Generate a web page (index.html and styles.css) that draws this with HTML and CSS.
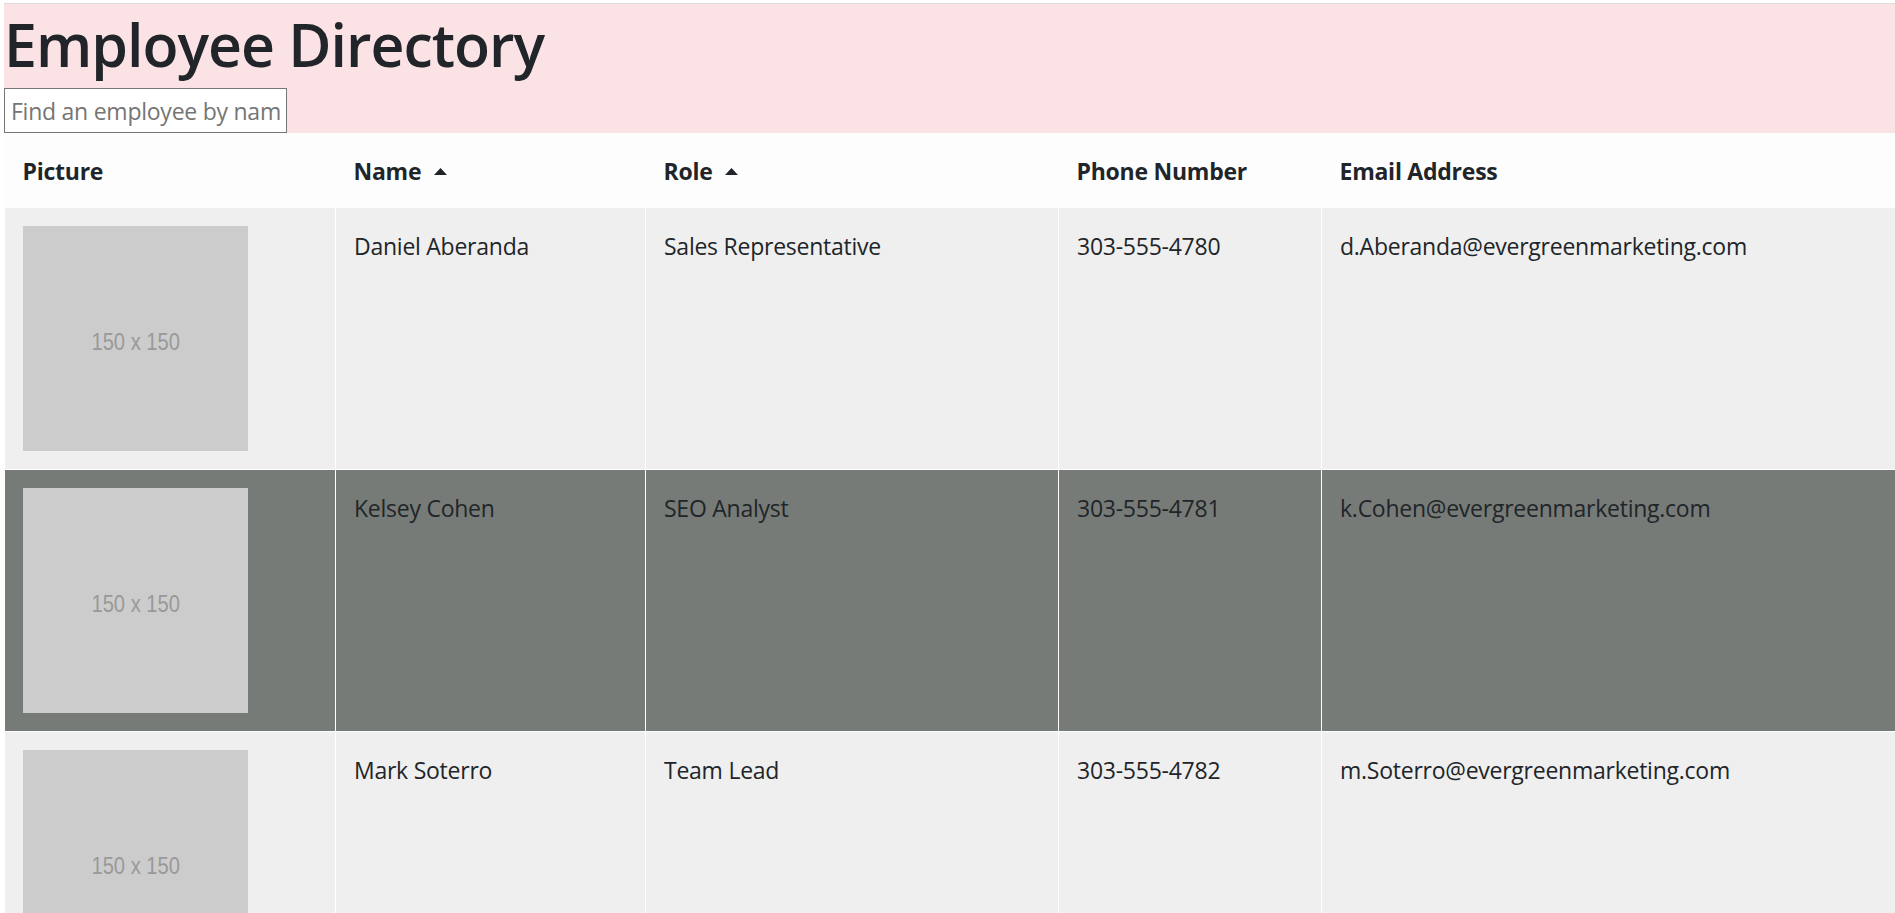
FILE: index.html
```html
<!DOCTYPE html>
<html lang="en">
<head>
<meta charset="utf-8">
<title>Employee Directory</title>
<link rel="stylesheet" href="styles.css">
</head>
<body>
<div class="page">
  <header class="banner">
    <h1 class="title">Employee Directory</h1>
    <input class="search" type="text" placeholder="Find an employee by name">
  </header>
  <table class="directory">
    <colgroup>
      <col class="c-pic">
      <col class="c-name">
      <col class="c-role">
      <col class="c-phone">
      <col class="c-email">
    </colgroup>
    <thead>
      <tr>
        <th>Picture</th>
        <th>Name <svg class="sort" width="13" height="7" viewBox="0 0 13 7"><polygon points="0,7 6.5,0 13,7" fill="#212529"/></svg></th>
        <th>Role <svg class="sort" width="13" height="7" viewBox="0 0 13 7"><polygon points="0,7 6.5,0 13,7" fill="#212529"/></svg></th>
        <th>Phone Number</th>
        <th>Email Address</th>
      </tr>
    </thead>
    <tbody>
      <tr class="row-light">
        <td><div class="ph"><span>150 x 150</span></div></td>
        <td>Daniel Aberanda</td>
        <td>Sales Representative</td>
        <td>303-555-4780</td>
        <td>d.Aberanda@evergreenmarketing.com</td>
      </tr>
      <tr class="row-dark">
        <td><div class="ph"><span>150 x 150</span></div></td>
        <td>Kelsey Cohen</td>
        <td>SEO Analyst</td>
        <td>303-555-4781</td>
        <td>k.Cohen@evergreenmarketing.com</td>
      </tr>
      <tr class="row-light">
        <td><div class="ph"><span>150 x 150</span></div></td>
        <td>Mark Soterro</td>
        <td>Team Lead</td>
        <td>303-555-4782</td>
        <td>m.Soterro@evergreenmarketing.com</td>
      </tr>
    </tbody>
  </table>
</div>
</body>
</html>
```

FILE: styles.css
```css
html, body {
  margin: 0;
  padding: 0;
  background: #ffffff;
}

body {
  font-family: "Open Sans", "Noto Sans", sans-serif;
  font-size: 23px;
  letter-spacing: -0.25px;
  line-height: 36px;
  color: #212529;
  overflow: hidden;
}

.page {
  margin: 3px 0 0 4px;
  border-top: 1px solid #dcdde0;
}

.banner {
  background: #fbe2e5;
  display: flex;
  flex-direction: column;
  align-items: flex-start;
}

.title {
  margin: 0 0 8px 0;
  padding-top: 4px;
  font-size: 59px;
  line-height: 72px;
  font-weight: 600;
  letter-spacing: -1px;
  color: #212529;
}

.search {
  box-sizing: border-box;
  width: 283px;
  height: 45px;
  margin: 0;
  padding: 0 6px;
  border: 1px solid #767676;
  background: #ffffff;
  font-family: inherit;
  font-size: 23px;
  letter-spacing: -0.25px;
  color: #212529;
  outline: none;
}

.search::placeholder {
  color: #757575;
}

.directory {
  width: 1891px;
  table-layout: fixed;
  border-collapse: collapse;
}

.c-pic { width: 331px; }
.c-name { width: 310px; }
.c-role { width: 413px; }
.c-phone { width: 263px; }
.c-email { width: 574px; }

.directory th,
.directory td {
  padding: 20px 18px 16px 18px;
  text-align: left;
  vertical-align: top;
  white-space: nowrap;
  overflow: hidden;
}

.directory th {
  background: #fdfdfd;
  font-weight: 700;
  height: 36px;
  border: none;
}

.directory td {
  border: 1px solid #ffffff;
}

.directory td:first-child {
  padding-top: 18px;
  padding-bottom: 18px;
}

.directory tbody tr:first-child td {
  border-top: 3px solid #fdfdfd;
}

.sort {
  margin-left: 7px;
  vertical-align: 5px;
}

.row-light td { background: #efefef; }
.row-dark td { background: #767b77; }

.ph {
  width: 225px;
  height: 225px;
  background: #cccccc;
  display: flex;
  align-items: center;
  justify-content: center;
}

.ph span {
  font-family: "Liberation Sans", Arial, sans-serif;
  font-size: 24px;
  letter-spacing: 0;
  color: #999999;
  transform: scaleX(0.84);
  padding-top: 6px;
}
```
